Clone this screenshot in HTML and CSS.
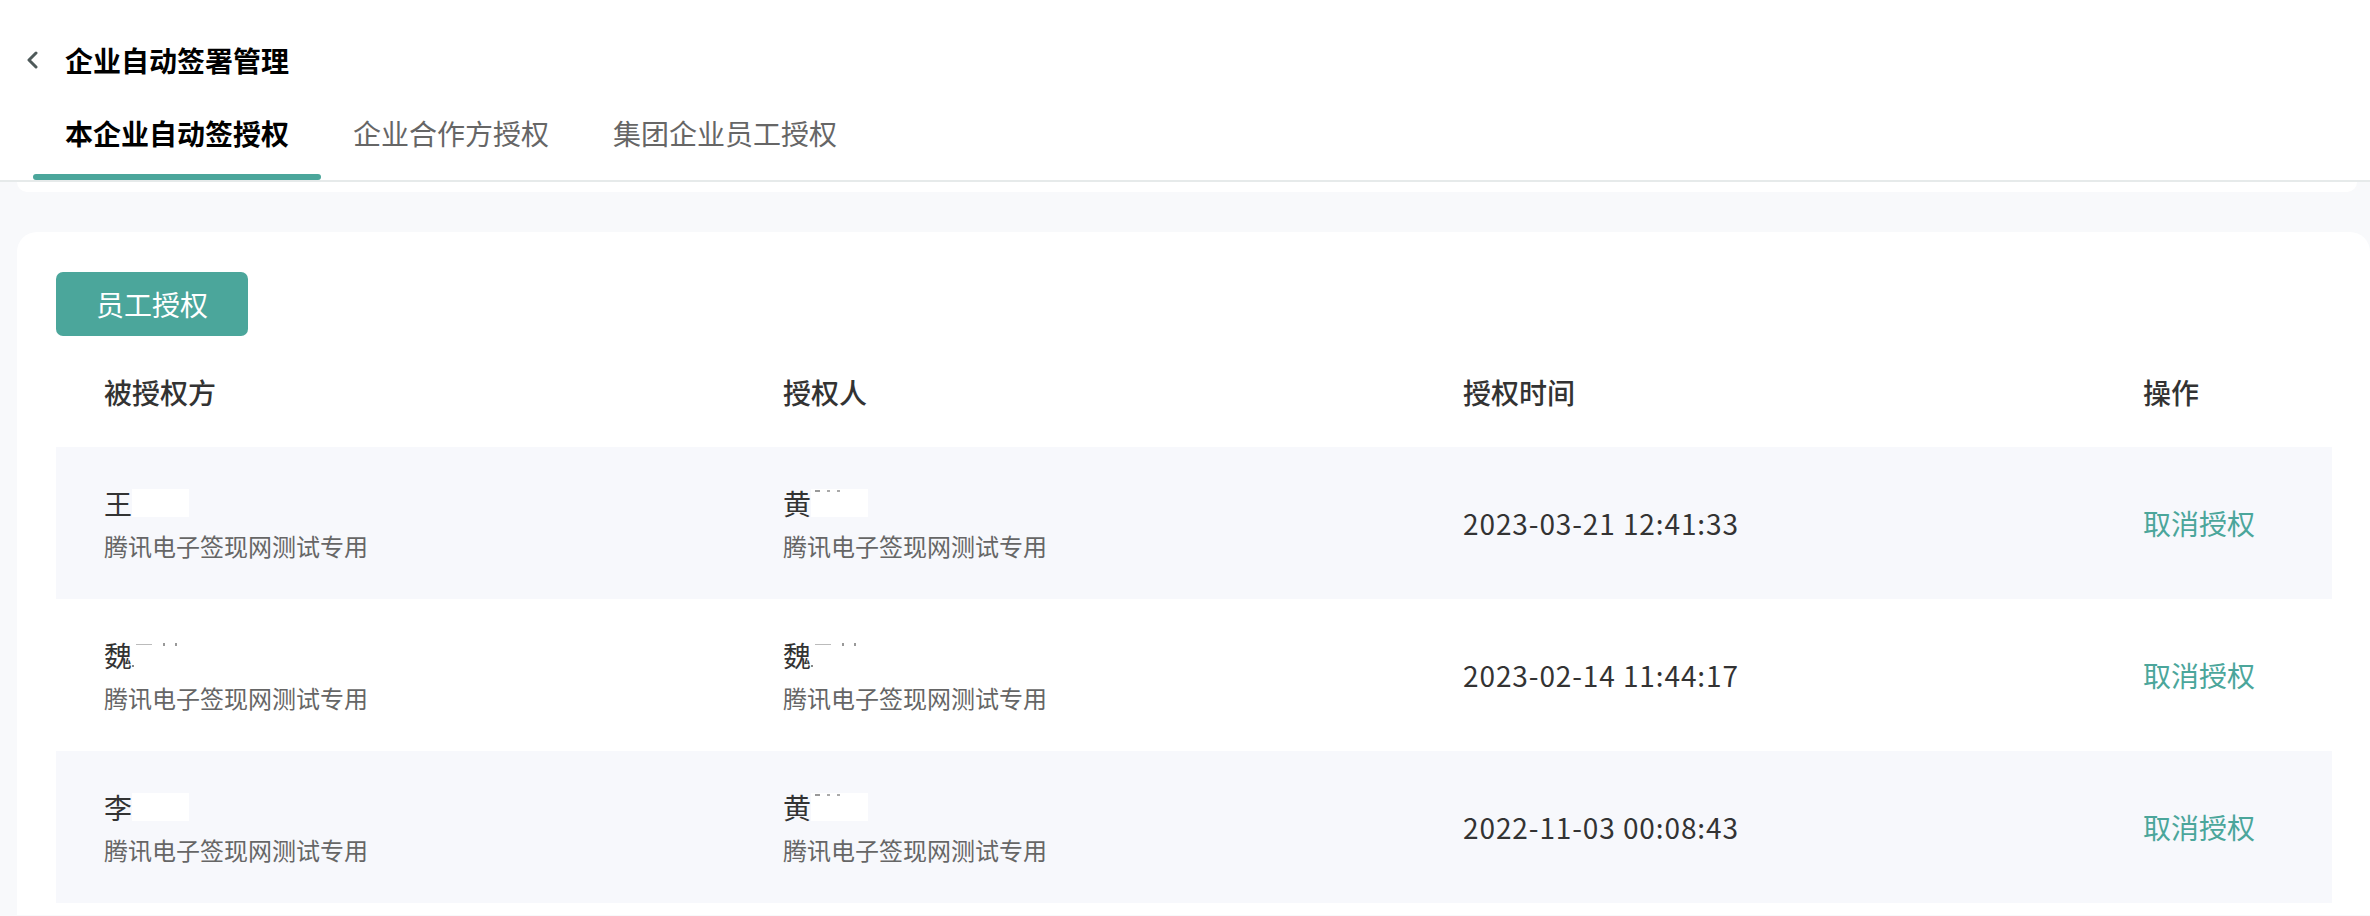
FILE: index.html
```html
<!DOCTYPE html>
<html lang="zh-CN">
<head>
    <meta charset="UTF-8">
    <meta name="viewport" content="width=device-width, initial-scale=1.0">
    <title>企业自动签署管理</title>
    <link rel="stylesheet" href="styles.css">
</head>
<body>

<div class="page-header">
    <div class="title-bar">
        <svg class="back-icon" width="13" height="18" viewBox="0 0 13 18">
            <polyline points="10,2 3,9 10,16" fill="none" stroke="#4f5a5a" stroke-width="3" stroke-linecap="round" stroke-linejoin="round"/>
        </svg>
        <h1>企业自动签署管理</h1>
    </div>
    <div class="tabs">
        <div class="tab active">本企业自动签授权</div>
        <div class="tab">企业合作方授权</div>
        <div class="tab">集团企业员工授权</div>
    </div>
</div>

<div class="strip"></div>

<div class="card">
    <button class="primary-btn">员工授权</button>

    <div class="table">
        <div class="table-head">
            <div>被授权方</div>
            <div>授权人</div>
            <div>授权时间</div>
            <div>操作</div>
        </div>

        <div class="table-row striped">
            <div class="person">
                <div class="name">王<span class="mask"></span></div>
                <div class="org">腾讯电子签现网测试专用</div>
            </div>
            <div class="person">
                <div class="name">黄<span class="mask"><svg width="57" height="6"><rect x="4" y="1" width="5" height="2" fill="#999"/><rect x="16" y="1" width="3" height="2" fill="#aaa"/><rect x="26" y="1" width="3" height="2" fill="#aaa"/></svg></span></div>
                <div class="org">腾讯电子签现网测试专用</div>
            </div>
            <div class="time">2023-03-21 12:41:33</div>
            <div><a class="action" href="#">取消授权</a></div>
        </div>

        <div class="table-row">
            <div class="person">
                <div class="name">魏<span class="mask"><svg width="57" height="28"><rect x="4" y="3" width="16" height="1" fill="#bbb"/><rect x="31" y="2" width="2" height="3" fill="#999"/><rect x="43" y="2" width="2" height="3" fill="#999"/><rect x="0" y="24" width="2" height="2" fill="#888"/></svg></span></div>
                <div class="org">腾讯电子签现网测试专用</div>
            </div>
            <div class="person">
                <div class="name">魏<span class="mask"><svg width="57" height="28"><rect x="4" y="3" width="16" height="1" fill="#bbb"/><rect x="31" y="2" width="2" height="3" fill="#999"/><rect x="43" y="2" width="2" height="3" fill="#999"/><rect x="0" y="24" width="2" height="2" fill="#888"/></svg></span></div>
                <div class="org">腾讯电子签现网测试专用</div>
            </div>
            <div class="time">2023-02-14 11:44:17</div>
            <div><a class="action" href="#">取消授权</a></div>
        </div>

        <div class="table-row striped">
            <div class="person">
                <div class="name">李<span class="mask"></span></div>
                <div class="org">腾讯电子签现网测试专用</div>
            </div>
            <div class="person">
                <div class="name">黄<span class="mask"><svg width="57" height="6"><rect x="4" y="1" width="5" height="2" fill="#999"/><rect x="16" y="1" width="3" height="2" fill="#aaa"/><rect x="26" y="1" width="3" height="2" fill="#aaa"/></svg></span></div>
                <div class="org">腾讯电子签现网测试专用</div>
            </div>
            <div class="time">2022-11-03 00:08:43</div>
            <div><a class="action" href="#">取消授权</a></div>
        </div>
    </div>
</div>

</body>
</html>
```

FILE: styles.css
```css
body {
    margin: 0;
    background: #f8f9fb;
    font-family: "Noto Sans CJK SC", "Noto Sans", sans-serif;
    color: #333;
}
.page-header {
    background: #fff;
    border-bottom: 2px solid #e6eaea;
}
.title-bar {
    height: 113px;
    display: flex;
    align-items: center;
    padding-left: 26px;
    box-sizing: border-box;
    padding-top: 7px;
}
.back-icon {
    margin-right: 26px;
}
.title-bar h1 {
    margin: 0;
    font-size: 28px;
    font-weight: 700;
    color: #000;
    line-height: 40px;
}
.tabs {
    display: flex;
    padding-left: 33px;
}
.tab {
    padding: 0 32px;
    font-size: 28px;
    line-height: 40px;
    color: #666;
}
.tab::after {
    content: '';
    display: block;
    height: 6px;
    margin: 21px -32px 0;
    border-radius: 3px;
}
.tab.active {
    color: #000;
    font-weight: 700;
}
.tab.active::after {
    background: #4ba69b;
}
.strip {
    height: 10px;
    margin: 0 13px 40px 17px;
    background: #fff;
    border-radius: 0 0 14px 14px;
}
.card {
    margin-left: 17px;
    background: #fff;
    border-radius: 20px 20px 0 0;
    padding: 40px 38px 12px 39px;
}
.primary-btn {
    display: block;
    width: 192px;
    height: 64px;
    border: none;
    border-radius: 7px;
    background: #4ba69b;
    color: #fff;
    font-family: inherit;
    font-size: 28px;
    cursor: pointer;
}
.table-head, .table-row {
    display: grid;
    grid-template-columns: 679px 680px 680px 1fr;
    padding-left: 48px;
    align-items: center;
}
.table-head {
    height: 111px;
    font-size: 28px;
    font-weight: 500;
    color: #333;
}
.table-row {
    height: 152px;
}
.table-row.striped {
    background: #f7f8fc;
}
.name {
    display: flex;
    align-items: center;
    font-size: 28px;
    line-height: 40px;
    color: #333;
    margin-bottom: 6px;
}
.mask {
    display: inline-block;
    width: 57px;
    height: 28px;
    background: #fff;
}
.mask svg {
    display: block;
}
.org {
    font-size: 24px;
    line-height: 34px;
    color: #666;
}
.time {
    font-size: 28px;
    letter-spacing: 0.9px;
    color: #333;
}
.action {
    font-size: 28px;
    color: #4ba69b;
    text-decoration: none;
}
```
